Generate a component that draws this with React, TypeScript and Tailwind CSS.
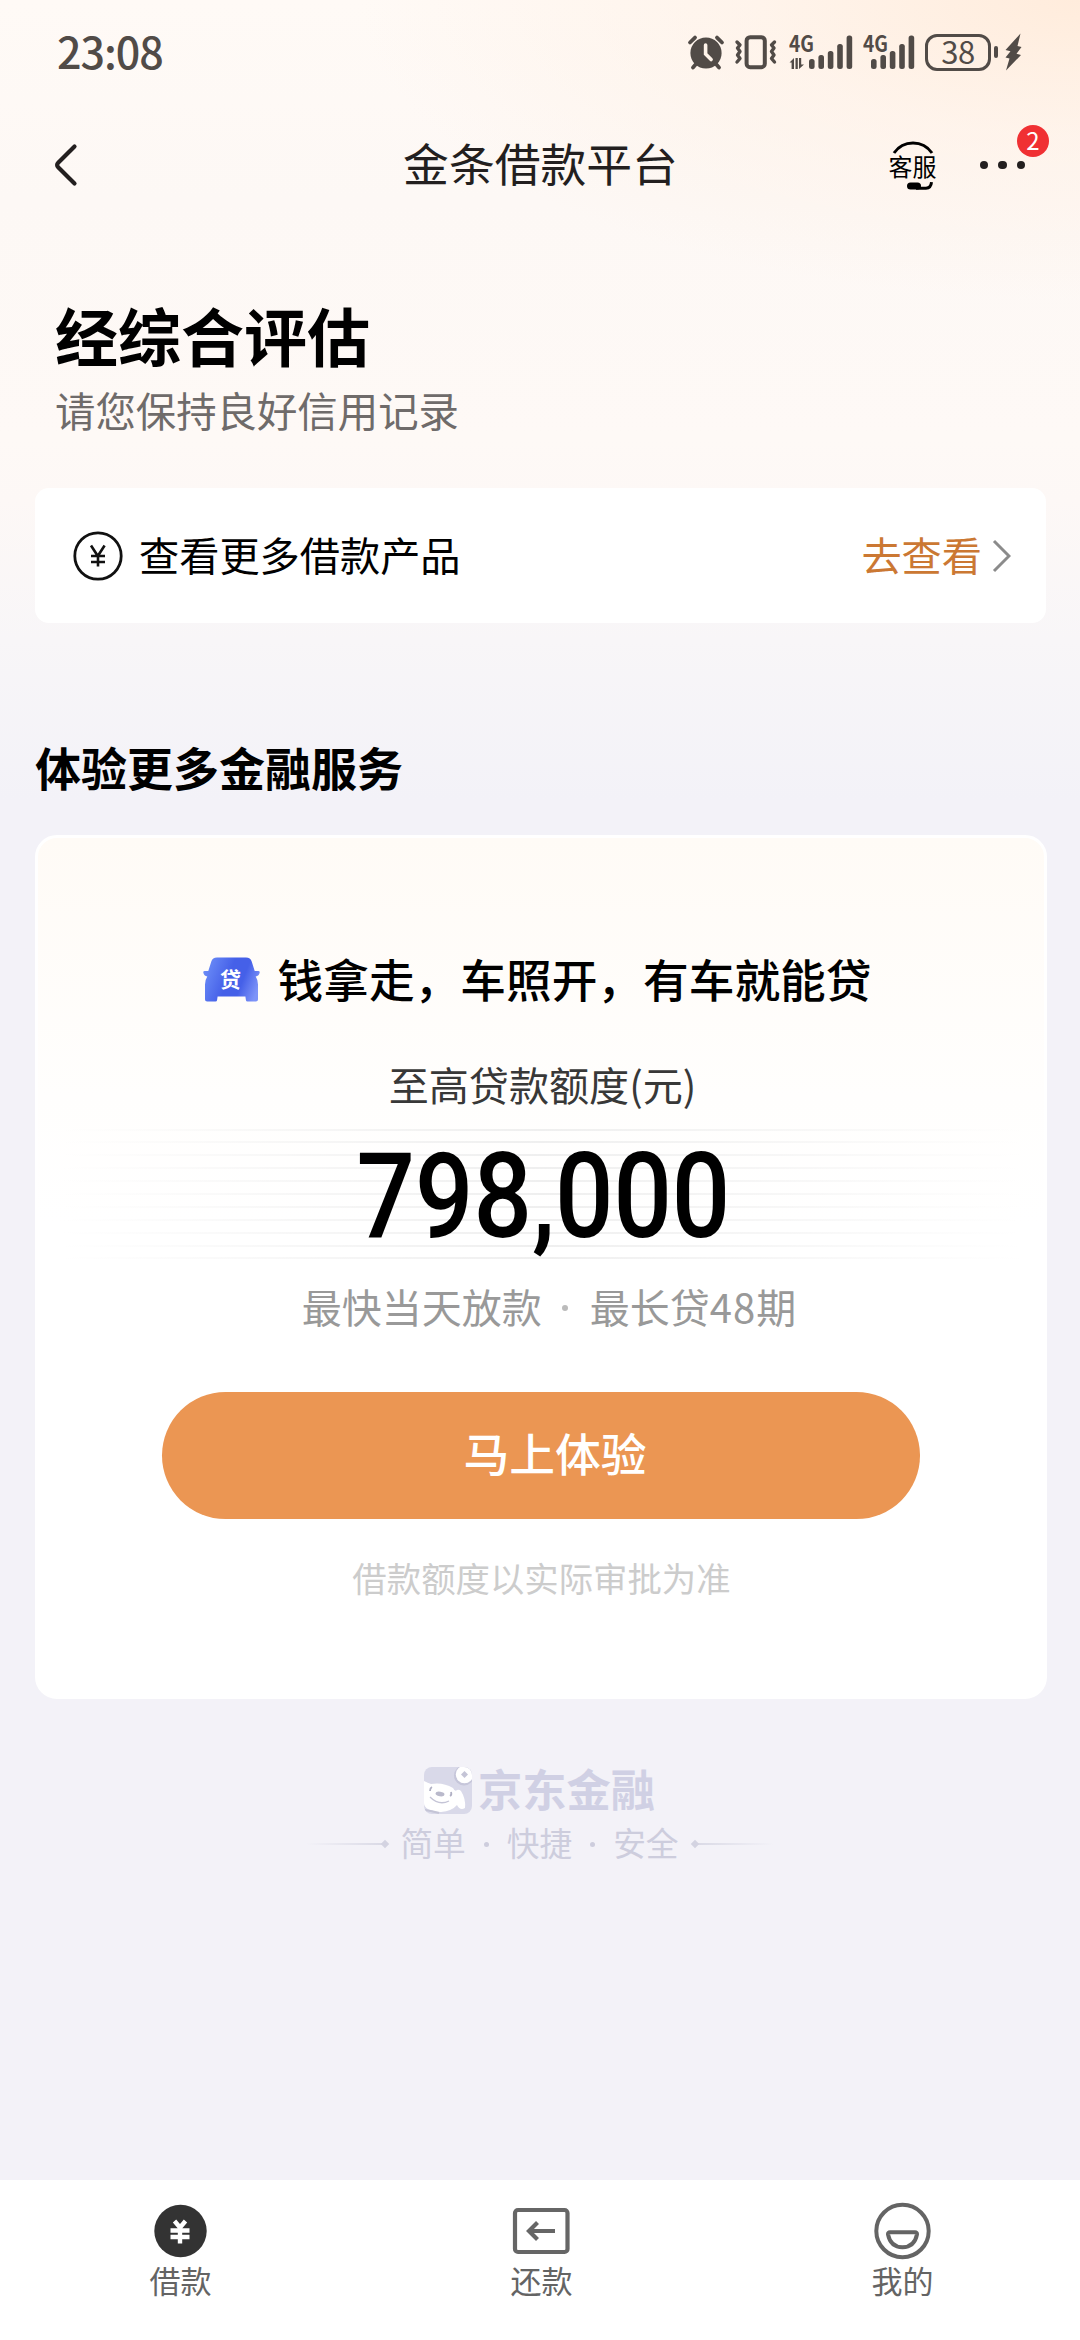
import React from "react";

const INK = "#514b47";

function AlarmIcon() {
  return (
    <svg className="h-[38px] w-[38px]" viewBox="0 0 38 38" fill="none" stroke={INK} strokeLinecap="round">
      <circle cx="19" cy="20" r="15.6" fill={INK} stroke="none" />
      <path d="M3 9.500 8 4.600M35 9.500 30 4.600" strokeWidth="3.800" />
      <path d="M9 31 6 34.500M29 31 32 34.500" strokeWidth="3.800" />
      <path d="M18.600 12v9l5.500 5.500" stroke="#fff4ea" strokeWidth="3.600" />
    </svg>
  );
}

function VibrateIcon() {
  return (
    <svg className="h-[38px] w-[44px]" viewBox="0 0 44 38" fill="none" stroke={INK} strokeLinejoin="round" strokeLinecap="round">
      <rect x="12.600" y="4.200" width="18.200" height="30" rx="3.500" strokeWidth="4" />
      <path d="M3 9 6 12 3.500 15 6 18.500 3.500 22 6 25.500 3 29" strokeWidth="3.400" />
      <path d="M40.500 9 37.500 12 40 15 37.500 18.500 40 22 37.500 25.500 40.500 29" strokeWidth="3.400" />
    </svg>
  );
}

function SignalIcon({ arrows }: { arrows?: boolean }) {
  const x = arrows ? 20 : 8;
  const tops = [25, 21, 17, 10, 1.5];
  return (
    <svg className={arrows ? "h-[54px] w-[64px]" : "h-[54px] w-[52px]"} viewBox={arrows ? "0 -9 64 54" : "0 -9 52 54"} fill={INK}>
      <text x="0" y="18" fontSize="22" fontWeight="700" textLength="25" lengthAdjust="spacingAndGlyphs" fontFamily="'Noto Sans CJK SC', sans-serif">
        4G
      </text>
      {arrows && <path d="M0.500 28.500 5 24v11H2.600v-6.500zM6.500 24h2.300v11H6.500zM10 24h2.200v6.500H15L10 35z" />}
      {tops.map((t, i) => (
        <rect key={i} x={x + i * 9.4} y={t} width="5.600" height={35 - t} rx="2.500" />
      ))}
    </svg>
  );
}

function StatusBar() {
  return (
    <div className="flex h-[104px] shrink-0 items-center justify-between pl-[57px] pr-[58px]">
      <div className="-mt-[4px] text-[43px] font-medium leading-none tracking-[-1px] text-[#514b47]">23:08</div>
      <div className="flex h-[38px] items-center">
        <AlarmIcon />
        <div className="ml-[9px]"><VibrateIcon /></div>
        <div className="ml-[11px]"><SignalIcon arrows /></div>
        <div className="ml-[10px]"><SignalIcon /></div>
        <div className="ml-[10px] flex h-[37px] w-[66px] items-center justify-center rounded-[12px] border-[3px] border-[#514b47] pb-[4px] text-[31px] leading-none tracking-[-0.5px] text-[#514b47]">
          38
        </div>
        <div className="ml-[3px] h-[12px] w-[4px] rounded-sm bg-[#514b47]" />
        <svg className="ml-[7px] h-[38px] w-[17px]" viewBox="0 0 17 38" fill={INK}>
          <path d="M15.500 0.500 0.500 17l5 1.200L0.500 24.500l4 1L1 37.500 16 22l-4.500-1.200L16.500 14l-4-1z" />
        </svg>
      </div>
    </div>
  );
}

function Header() {
  return (
    <div className="grid h-[122px] shrink-0 grid-cols-[1fr_auto_1fr] items-center pl-[52px] pr-[32px]">
      <svg className="h-[44px] w-[26px]" viewBox="0 0 26 44" fill="none" stroke="#231f1f" strokeWidth="4.200" strokeLinecap="round" strokeLinejoin="round">
        <path d="M22.500 3.500 6.200 19.800q-2.200 2.200 0 4.400L22.500 40.500" />
      </svg>
      <div className="-ml-[19px] -mt-[5px] text-[45.800px] leading-none text-[#231f1f]">金条借款平台</div>
      <div className="relative flex h-[60px] items-center justify-end">
        <div className="mr-[42px] flex w-[50px] flex-col items-center">
          <svg className="h-[13px] w-[42px]" viewBox="0 0 42 13" fill="none" stroke="#000" strokeWidth="3">
            <path d="M2 12Q9 2 21 2t19 10" />
          </svg>
          <div className="-mt-[2px] text-[24px] leading-[27px] text-black">客服</div>
          <svg className="mt-[2px] h-[9px] w-[42px]" viewBox="0 0 42 9">
            <rect x="15" y="1.500" width="14" height="7" rx="3.500" />
            <path d="M24 7.200h10q5 0 5.500-6" fill="none" stroke="#000" strokeWidth="3" />
          </svg>
        </div>
        <div className="mr-[23px] flex gap-[10px]">
          <span className="h-[8.500px] w-[8.500px] rounded-full bg-[#231f1f]" />
          <span className="h-[8.500px] w-[8.500px] rounded-full bg-[#231f1f]" />
          <span className="h-[8.500px] w-[8.500px] rounded-full bg-[#231f1f]" />
        </div>
        <div className="absolute -right-[1px] -top-[10px] flex h-[32px] w-[32px] items-center justify-center rounded-full bg-[#f03033] pb-[2px] text-[24px] leading-none text-white">
          2
        </div>
      </div>
    </div>
  );
}

function ProductRow() {
  return (
    <div className="mt-[58px] flex h-[135px] w-[1011px] items-center rounded-[14px] bg-white pl-[38px] pr-[35px]">
      <svg className="h-[50px] w-[50px]" viewBox="0 0 50 50" fill="none" stroke="#111">
        <circle cx="25" cy="25" r="23.200" strokeWidth="2.800" />
        <path d="M18 14.500l6.800 10.500 6.800-10.500M18 25h14M18 31h14M25 25v10.500" strokeWidth="2.600" />
      </svg>
      <div className="-mt-[3px] ml-[16px] text-[40.200px] leading-none text-black">查看更多借款产品</div>
      <div className="-mt-[3px] ml-auto text-[40.200px] leading-none text-[#cb7833]">去查看</div>
      <svg className="ml-[10px] h-[34px] w-[19px]" viewBox="0 0 19 34" fill="none" stroke="#8b8b8b" strokeWidth="3">
        <path d="M2 2 17 17 2 32" />
      </svg>
    </div>
  );
}

function CarIcon() {
  return (
    <div className="relative mt-[2px] h-[45px] w-[57px]">
      <svg className="h-full w-full" viewBox="0 0 57 45">
        <defs>
          <linearGradient id="car" x1="0" y1="0.300" x2="1" y2="0.600">
            <stop offset="0" stopColor="#6b8cf7" />
            <stop offset="0.450" stopColor="#4560e8" />
            <stop offset="0.700" stopColor="#4560e8" />
            <stop offset="1" stopColor="#7d93f8" />
          </linearGradient>
        </defs>
        <path
          fill="url(#car)"
          d="M14 0.500h29q4.500 0 5.700 4l3 9.500h3.500q1.800 0 1.500 1.600-0.600 3.600-4 4 2.300 3.400 2.300 8v14.800q0 2.100-2.100 2.100h-8.300q-1.500 0-1.700-1.600l-0.500-3.400H14.600l-0.500 3.400q-0.200 1.600-1.700 1.600H4.100Q2 44.500 2 42.400V27.600q0-4.600 2.300-8-3.400-0.400-4-4Q0 14 1.800 14h3.500l3-9.500q1.200-4 5.700-4z"
        />
      </svg>
      <span className="absolute left-[17.500px] top-[11px] text-[21px] font-bold leading-none text-white">贷</span>
    </div>
  );
}

const STRIPES = Array.from({ length: 11 }, (_, i) => i);

function OfferCard() {
  return (
    <div className="mt-[46px] flex h-[864px] w-[1012px] flex-col items-center rounded-[22px] border-[3px] border-white bg-linear-to-b from-[#fffbf6] via-[#fffefd] via-30% to-white to-45% pt-[117px]">
      <div className="-ml-[8px] flex items-center">
        <CarIcon />
        <div className="ml-[18px] text-[45.700px] font-medium leading-none text-black">钱拿走，车照开，有车就能贷</div>
      </div>
      <div className="ml-[3px] mt-[62px] text-[40.100px] leading-none text-[#383838]">至高贷款额度(元)</div>
      <div className="relative mt-[24px] flex h-[131px] w-[960px] items-center justify-center">
        <div className="absolute inset-0 flex flex-col justify-between">
          {STRIPES.map((i) => (
            <div key={i} className="h-[2px] bg-linear-to-r from-transparent via-[#efefef] to-transparent" />
          ))}
        </div>
        <div className="relative ml-[4px] mt-[5px] origin-center scale-x-[0.872] font-['Roboto'] text-[118px] font-medium leading-none text-black">
          798,000
        </div>
      </div>
      <div className="ml-[16px] mt-[26px] flex items-center text-[40px] leading-none text-[#999]">
        <span>最快当天放款</span>
        <span className="ml-[20px] mr-[22px] mt-[4px] h-[6px] w-[6px] rounded-full bg-[#bbb]" />
        <span>
          最长贷<span className="tracking-[1px]">48</span>期
        </span>
      </div>
      <button className="mt-[66px] flex h-[127px] w-[758px] items-center justify-center rounded-full bg-[#eb9653] pb-[4px] pl-[28px] text-[45.800px] font-medium leading-none text-white">
        马上体验
      </button>
      <div className="ml-[1px] mt-[41px] text-[34.400px] leading-none text-[#ccc]">借款额度以实际审批为准</div>
    </div>
  );
}

function Footer() {
  return (
    <div className="mt-[68px] flex w-[1012px] flex-col items-center">
      <div className="-ml-[3px] flex h-[47px] items-center">
        <svg className="h-[47px] w-[48px]" viewBox="0 0 48 47">
          <defs>
            <clipPath id="dog">
              <rect width="48" height="47" rx="8" />
            </clipPath>
          </defs>
          <g clipPath="url(#dog)">
            <rect width="48" height="47" fill="#d9d9e9" />
            <path d="M0 14q4 2 7 3 12-2 22 4 2 4 4 2 2-1 4 1 5 8 4 17-5 3-8-3-5 6-16 7Q0 44 0 36z" fill="#fff" />
            <circle cx="40" cy="8.500" r="10" fill="#c6c6da" />
            <circle cx="40.500" cy="7.500" r="8.700" fill="#fff" />
            <path d="M40.500 4 44 7.500 40.500 11 37 7.500z" fill="#c4c4d6" />
            <ellipse cx="16" cy="27" rx="4.500" ry="2.300" fill="#b9b9cb" transform="rotate(8 16 27)" />
            <path d="M6 24q0-3 2-4M26 29q2-1 1-4" stroke="#b0b0c4" strokeWidth="1.800" fill="none" />
            <path d="M6 30q9 9 19 4" stroke="#c4c4d6" strokeWidth="1.300" fill="none" />
            <path d="M1 43q7 1 14 3" stroke="#c4c4d6" strokeWidth="2" fill="none" />
          </g>
        </svg>
        <div className="-mt-[5px] ml-[6px] text-[44.300px] font-bold leading-none text-[#d0d0e4]">京东金融</div>
      </div>
      <div className="-ml-[2px] mt-[12px] flex items-center text-[32.700px] leading-none text-[#cdcddd]">
        <span className="mt-[2px] h-[2px] w-[76px] bg-linear-to-r from-transparent to-[#dadae6]" />
        <span className="mr-[12px] mt-[2px] h-[6px] w-[6px] rotate-45 bg-[#d3d3e1]" />
        <span>简单</span>
        <span className="mx-[18px] mt-[4px] h-[5px] w-[5px] rounded-full bg-[#cdcddd]" />
        <span>快捷</span>
        <span className="mx-[18px] mt-[4px] h-[5px] w-[5px] rounded-full bg-[#cdcddd]" />
        <span>安全</span>
        <span className="ml-[13px] mt-[2px] h-[6px] w-[6px] rotate-45 bg-[#d3d3e1]" />
        <span className="mt-[2px] h-[2px] w-[76px] bg-linear-to-l from-transparent to-[#dadae6]" />
      </div>
    </div>
  );
}

function NavItem({ label, children }: { label: string; children: React.ReactNode }) {
  return (
    <div className="flex flex-1 flex-col items-center pt-[21px]">
      {children}
      <div className="mt-[3px] text-[31px] leading-none text-[#646464]">{label}</div>
    </div>
  );
}

function TabBar() {
  return (
    <div className="mt-auto flex h-[160px] w-[1083px] shrink-0 bg-white">
      <NavItem label="借款">
        <svg className="h-[60px] w-[60px]" viewBox="0 0 60 60" fill="none" stroke="#fff">
          <circle cx="29.500" cy="30" r="26.200" fill="#333" stroke="none" />
          <path d="M23.500 20l5.500 6.500 5.500-6.500M19.500 29.500h19M19.500 36h19M29 27v15.500" strokeWidth="4.400" />
        </svg>
      </NavItem>
      <NavItem label="还款">
        <svg className="h-[60px] w-[60px]" viewBox="0 0 60 60" fill="none" stroke="#666" strokeWidth="4.200">
          <rect x="3" y="9" width="52.500" height="42" rx="3" />
          <path d="M43 30H17M25.500 21.500 17 30l8.500 8.500" />
        </svg>
      </NavItem>
      <NavItem label="我的">
        <svg className="h-[60px] w-[60px]" viewBox="0 0 60 60" fill="none" stroke="#646464" strokeWidth="4">
          <circle cx="29.500" cy="30" r="26.200" />
          <path d="M17 31.300h25q2.200 0 2 2Q41.500 46 29.500 46.200 17.500 46 15 33.300q-0.200-2 2-2z" />
        </svg>
      </NavItem>
    </div>
  );
}

export default function App() {
  return (
    <div
      lang="zh-CN"
      className="flex h-[2340px] w-[1080px] flex-col overflow-hidden bg-[#f3f2f8] bg-[radial-gradient(ellipse_720px_300px_at_100%_0%,#ffecdc_0%,rgba(255,240,228,0.6)_45%,rgba(255,248,242,0)_100%),linear-gradient(180deg,#fffaf6_0px,#fdf8f5_200px,#fef9f6_440px,#fdf8f6_500px,#f8f6f8_640px,#f3f2f8_800px)] font-['Noto_Sans_CJK_SC',sans-serif]"
    >
      <StatusBar />
      <Header />
      <main className="flex flex-col pl-[35px]">
        <h1 className="ml-[20px] mt-[76px] text-[63px] font-bold leading-none text-black">经综合评估</h1>
        <p className="ml-[20px] mt-[25px] text-[40.400px] leading-none text-[#6f6b6a]">请您保持良好信用记录</p>
        <ProductRow />
        <h2 className="mt-[120px] text-[46px] font-bold leading-none text-black">体验更多金融服务</h2>
        <OfferCard />
        <Footer />
      </main>
      <TabBar />
    </div>
  );
}
